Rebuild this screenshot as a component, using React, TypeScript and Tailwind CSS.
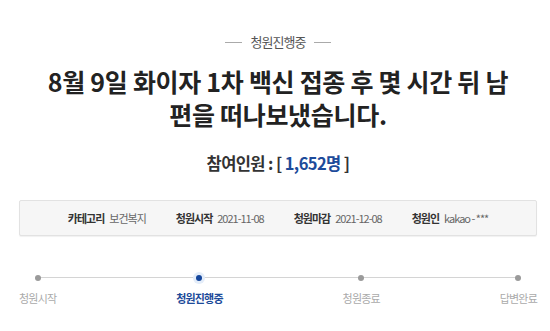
import React from "react";

const font = { fontFamily: '"Noto Sans CJK KR", "Noto Sans", sans-serif' };

const info = [
  { label: "카테고리", value: "보건복지" },
  { label: "청원시작", value: "2021-11-08" },
  { label: "청원마감", value: "2021-12-08" },
  { label: "청원인", value: "kakao - ***" },
];

const steps = ["청원시작", "청원진행중", "청원종료", "답변완료"];
const activeStep = 1;

export default function App() {
  return (
    <div className="w-[550px] h-[331px] bg-white overflow-hidden" style={font}>
      <div className="ml-[19px] w-[518px] pt-[33px]">
        {/* status tag */}
        <div className="flex items-center justify-center gap-[9px]">
          <span className="w-[17px] h-px bg-[#aaaaaa]" />
          <span className="text-[13px] leading-[18px] tracking-[-1px] text-[#555555]">청원진행중</span>
          <span className="w-[17px] h-px bg-[#aaaaaa]" />
        </div>

        <h1 className="mt-[14px] px-[22px] text-center text-[25px] leading-[33px] font-bold tracking-[-0.3px] text-[#222222]">
          8월 9일 화이자 1차 백신 접종 후 몇 시간 뒤 남편을 떠나보냈습니다.
        </h1>

        <div className="mt-[20px] text-center text-[16.5px] leading-[24px] font-bold tracking-[-0.6px] text-[#333333]">
          참여인원 : [ <span className="text-[#1d4b9a]">1,652명</span> ]
        </div>

        <div className="mt-[25px] h-[36px] flex items-center justify-center gap-[30px] bg-[#f6f6f6] border border-[#e2e2e2] rounded-[2px] shadow-[0_1px_1px_rgba(0,0,0,0.06)]">
          {info.map(i => (
            <div key={i.label} className="flex items-center gap-[5px] text-[11px] tracking-[-1px]">
              <span className="font-bold text-[#333333]">{i.label}</span>
              <span className="text-[#666666]">{i.value}</span>
            </div>
          ))}
        </div>

        <div className="relative mt-[36px] flex justify-between">
          <div className="absolute left-[17px] right-[18px] top-[5px] h-px bg-[#d4d4d4]" />
          {steps.map((s, idx) => (
            <div key={s} className="relative flex flex-col items-center">
              <div className="w-[12px] h-[12px] flex items-center justify-center">
                {idx === activeStep ? (
                  <div className="w-[12px] h-[12px] rounded-full bg-[#e4edf9] flex items-center justify-center">
                    <div className="w-[6px] h-[6px] rounded-full bg-[#14469c]" />
                  </div>
                ) : (
                  <div className="w-[6px] h-[6px] rounded-full bg-[#9a9a9a]" />
                )}
              </div>
              <span
                className={
                  idx === activeStep
                    ? "mt-[6px] text-[11px] leading-[16px] tracking-[-0.8px] font-bold text-[#1d4b9a]"
                    : "mt-[6px] text-[11px] leading-[16px] tracking-[-0.8px] text-[#aaaaaa]"
                }
              >
                {s}
              </span>
            </div>
          ))}
        </div>
      </div>
    </div>
  );
}
